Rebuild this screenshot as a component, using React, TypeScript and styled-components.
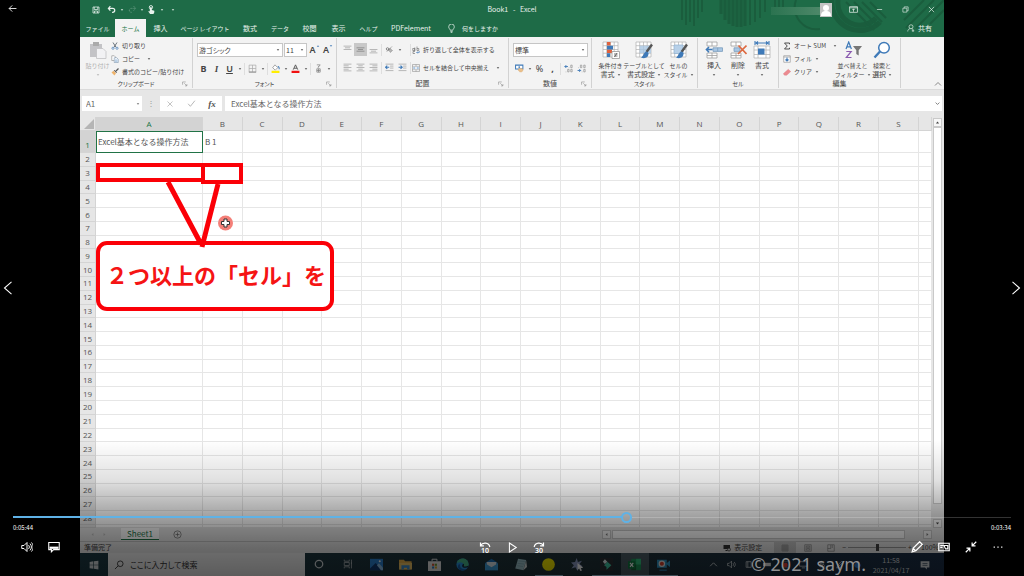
import React, { useState } from "react";
import styled, { createGlobalStyle, css } from "styled-components";

const Global = createGlobalStyle`
  *, *::before, *::after { box-sizing: border-box; }
  body { margin: 0; background: #000; overflow: hidden; }
  body, button, input, select { font-family: "Noto Sans CJK JP", "Noto Sans", sans-serif; }
  button, input, select { margin: 0; padding: 0; border: 0; background: none; color: inherit; font-size: inherit; line-height: inherit; border-radius: 0; outline: 0; }
  table { border-spacing: 0; }
`;

/* ---------- icons ---------- */

const Svg = styled.svg<{ $w: number; $h: number }>`
  display: block;
  flex: none;
  width: ${(p) => p.$w}px;
  height: ${(p) => p.$h}px;
  fill: none;
  stroke: currentColor;
  stroke-width: 1;
`;

const sheetGrid = (
  <>
    <path d="M1 1h15v15h-15z" fill="#fff" stroke="#b0b0b0" strokeWidth=".7" />
    <path d="M1 4.7h15M1 8.5h15M1 12.2h15M4.7 1v15M8.5 1v15M12.2 1v15" stroke="#b0b0b0" strokeWidth=".7" />
  </>
);
const brush = (
  <>
    <path d="M17 3.5l-5.5 7.5" stroke="#555" strokeWidth="2.4" />
    <path d="M11.6 10.5c-2.5 0-2.6 4-5.6 6 3 1.4 7.4 1 7.6-4.4z" fill="#3f7ab8" stroke="none" />
  </>
);
const cellRows = (
  <path d="M2 1h10v4h-10zM7 1v4M2 12h10v5h-10zM7 12v5M2 14.5h10" fill="#fff" stroke="#a0a0a0" strokeWidth=".8" />
);

const glyphs: Record<string, React.ReactNode> = {
  save: <path d="M2 2h12v12h-12zM4.5 2v5h7v-5M5 14v-4h6v4" strokeWidth="1.5" />,
  undo: <path d="M6 2L2.5 6L6 10M3 6h7c5 0 5 7 0 7h-1" strokeWidth="2.2" />,
  redo: <path d="M10 2L13.500 6L10 10M13 6h-7c-5 0-5 7 0 7h1" strokeWidth="1.5" strokeDasharray="2 1" />,
  touch: (
    <>
      <circle cx="7" cy="4" r="3" strokeWidth="1.6" />
      <path d="M5 4h3.500v5l4.500 1.200v2.800l-1.500 3h-6l-3.500-5h3z" fill="currentColor" stroke="none" />
    </>
  ),
  ribbonOpt: <path d="M1 3h14v10h-14zM1 5h14M8 12v-5M5.800 9l2.200-2.200L10.200 9" strokeWidth="1.3" />,
  minimize: <path d="M2 8h12" strokeWidth="1.5" />,
  restore: <path d="M2 5h9v9h-9zM5 5v-3h9v9h-3" strokeWidth="1.4" />,
  close: <path d="M2 2l12 12M14 2L2 14" strokeWidth="1.5" />,
  bulb: <path d="M5.500 11c0-2-2.500-3-2.500-6a5 5 0 0 1 10 0c0 3-2.500 4-2.500 6zM6 13.200h4M6.500 15.200h3" strokeWidth="1.3" />,
  person: <path d="M8 1.500a3.800 3.800 0 1 1 0 8a3.800 3.800 0 1 1 0-8M1.500 15c0-4 2.500-5.500 5-5.500M9 9.500c3 .5 3 1.500 3 2M12 11v5M9.500 13.500h5" strokeWidth="1.3" />,
  paste: (
    <>
      <path d="M1 3h12v13h-12z" fill="#c3c3c6" stroke="none" />
      <path d="M4 1h6v4h-6z" fill="#aaa" stroke="none" />
      <path d="M7.500 7.500h6.500l3 3v7h-9.500z" fill="#f2f2f4" stroke="#c0c0c3" strokeWidth=".8" />
    </>
  ),
  cut: (
    <>
      <path d="M4 1l6 9.500M12 1L6 10.500" stroke="#4a5560" strokeWidth="1.6" />
      <circle cx="4" cy="12.500" r="2.200" stroke="#3f7ab8" strokeWidth="1.4" />
      <circle cx="12" cy="12.500" r="2.200" stroke="#3f7ab8" strokeWidth="1.4" />
    </>
  ),
  copy: (
    <>
      <path d="M1.500 1.500h5l2.500 2.500v7h-7.500z" fill="#fff" stroke="#777" />
      <path d="M6.500 5.500h5l3 3v6.500h-8z" fill="#fff" stroke="#5f7f9f" />
      <path d="M8 10h5M8 12.500h5" stroke="#3f7ab8" />
    </>
  ),
  painter: (
    <>
      <path d="M15 1l-5 5" stroke="#555" strokeWidth="2.600" />
      <path d="M7.500 4l4.500 4.500-1.500 1.500-5-5z" fill="#555" stroke="none" />
      <path d="M5 5.500l5 5-3 4.500-6-6z" fill="#eeb36b" stroke="none" />
    </>
  ),
  launcher: <path d="M1.500 10v-7.500h8.500M6 6l6.500 6.500M13 8v5h-5" stroke="#777" strokeWidth="1.300" />,
  borders: (
    <>
      <path d="M2 2h12v12h-12zM8 2v12M2 8h12" stroke="#a5a5a5" strokeWidth="1.200" />
      <path d="M1.500 14.500h13" stroke="#777" strokeWidth="1.300" />
    </>
  ),
  fill: (
    <>
      <path d="M7 1.500l5 5-4.500 4.500-4.500-4.500z" fill="#fff" stroke="#666" />
      <path d="M12 4.500c3 0 2.500 3 2.500 5" stroke="#3f7ab8" strokeWidth="1.800" />
      <path d="M1 12h14v4h-14z" fill="#ffee00" stroke="none" />
    </>
  ),
  fontColor: (
    <>
      <path d="M4 10l4-8.500l4 8.500M5.500 7.500h5" stroke="#555" strokeWidth="1.700" />
      <path d="M1 12h14v4h-14z" fill="#f01010" stroke="none" />
    </>
  ),
  ruby: <path d="M5 1.500h6L7 6.500M8 4v2M5 8.500h6v6h-6zM5 11.500h6M8 8.500v6" stroke="#777" strokeWidth="1.200" />,
  alignTop: <path d="M1 2h14M3.500 5h9M1 8h14" stroke="#999" strokeWidth="1.200" />,
  alignMid: <path d="M1 5h14M3.500 8h9M1 11h14" stroke="#777" strokeWidth="1.200" />,
  alignBot: <path d="M1 8h14M3.500 11h9M1 14h14" stroke="#999" strokeWidth="1.200" />,
  orient: (
    <>
      <path d="M3 12L12.500 2.500M9 14l5-5" stroke="#888" strokeWidth="1.100" />
      <circle cx="4.500" cy="7" r="2.200" stroke="#666" strokeWidth="1.300" />
      <circle cx="9" cy="9" r="2.200" stroke="#666" strokeWidth="1.300" />
    </>
  ),
  left: <path d="M1 2h14M1 5h9M1 8h14M1 11h9M1 14h14" stroke="#999" strokeWidth="1.200" />,
  center: <path d="M1 2h14M4 5h8M1 8h14M4 11h8M1 14h14" stroke="#999" strokeWidth="1.200" />,
  right: <path d="M1 2h14M6 5h9M1 8h14M6 11h9M1 14h14" stroke="#999" strokeWidth="1.200" />,
  outdent: (
    <>
      <path d="M1 2h14M9 5.500h6M9 9h6M1 13.500h14" stroke="#999" strokeWidth="1.200" />
      <path d="M7.500 7.500h-6M4 4.500l-3 3l3 3" stroke="#3f7ab8" strokeWidth="2" />
    </>
  ),
  indent: (
    <>
      <path d="M1 2h14M9 5.500h6M9 9h6M1 13.500h14" stroke="#999" strokeWidth="1.200" />
      <path d="M1 7.500h6M4.500 4.500l3 3l-3 3" stroke="#3f7ab8" strokeWidth="2" />
    </>
  ),
  wrap: (
    <>
      <path d="M1.500 5h4v4h-4zM5.500 3v7M10 1v8h3.500v-4h-3.500M6 11h-4v4h4" stroke="#666" strokeWidth="1.200" />
      <path d="M14.500 10v3h-5M11.500 11l-2 2l2 2" stroke="#3f7ab8" strokeWidth="1.300" />
    </>
  ),
  merge: (
    <>
      <path d="M1 1h14v14h-14zM1 4.500h14M1 11.500h14M8 1v3.500M8 11.500v3.500" fill="#fff" stroke="#888" strokeWidth="1.100" />
      <path d="M3 8h4M9 8h4M5 6.500l-2 1.500l2 1.500M11 6.500l2 1.500l-2 1.500" stroke="#3f7ab8" strokeWidth="1.100" />
    </>
  ),
  currency: (
    <>
      <path d="M1 2h13v7h-13z" fill="#fff" stroke="#3f7ab8" strokeWidth="1.800" />
      <circle cx="7.500" cy="5.500" r="1.600" fill="#3f7ab8" stroke="none" />
      <path d="M6 9c2-1.500 6-1.500 8 0c0 4-1 5-4 5s-4-2-4-5z" fill="#eac08c" stroke="#d9a25e" strokeWidth=".800" />
    </>
  ),
  incDec: (
    <>
      <path d="M7 4.500h-5.500M4 2l-2.500 2.500l2.500 2.500" stroke="#3f7ab8" strokeWidth="1.700" />
      <path d="M8.500 6.500h1M12 2h2.500v4.500h-2.500zM3 14h1M6.500 9.500h2.500v4.500h-2.500zM12 9.500h2.500v4.500h-2.500z" stroke="#888" strokeWidth="1.100" />
    </>
  ),
  decDec: (
    <>
      <path d="M1 11.500h5.500M4 9l2.500 2.500l-2.500 2.500" stroke="#3f7ab8" strokeWidth="1.700" />
      <path d="M2.500 6.500h1M6 2h2.500v4.500h-2.500zM12 2h2.500v4.500h-2.500zM8.500 14h1M12 9.500h2.500v4.500h-2.500z" stroke="#888" strokeWidth="1.100" />
    </>
  ),
  condFormat: (
    <>
      {sheetGrid}
      <path d="M5 1h3.500v3.500h-3.500zM5 8.500h5v3.500h-5z" fill="#e0623d" stroke="none" />
      <path d="M5 4.700h6v3.800h-6zM5 12.200h3v3.800h-3z" fill="#3f7ab8" stroke="none" />
      <path d="M10 10.500h7.500v7h-7.500z" fill="#fff" stroke="#999" strokeWidth=".800" />
      <path d="M12 13h3.500M12 15h3.500M15 12l-2.500 4" stroke="#555" strokeWidth=".800" />
    </>
  ),
  tableFormat: (
    <>
      {sheetGrid}
      <path d="M4.700 4.700h11.300v7.500h-11.300z" fill="#a9c7e4" opacity=".8" stroke="none" />
      {brush}
    </>
  ),
  cellStyle: (
    <>
      {sheetGrid}
      <path d="M4 4h9v8.500h-9z" fill="#b7d0e8" stroke="#8fb1d1" strokeWidth=".700" />
      {brush}
    </>
  ),
  insertCell: (
    <>
      {cellRows}
      <path d="M8 6.800h9.500v3.600h-9.500zM12.700 6.800v3.600" fill="#a9c7e4" stroke="#7b9dbd" strokeWidth=".800" />
      <path d="M7.500 8.600h-6M4 6l-2.600 2.600l2.600 2.600" stroke="#3f7ab8" strokeWidth="1.500" />
    </>
  ),
  deleteCell: (
    <>
      {cellRows}
      <path d="M5 6.800h6v3.600h-6z" fill="#a9c7e4" stroke="#7b9dbd" strokeWidth=".800" />
      <path d="M9.500 4.500l8 8.500M17.500 4.500l-8.500 8.500" stroke="#dd6940" strokeWidth="1.700" />
    </>
  ),
  formatCell: (
    <>
      <path d="M1 5h16v12h-16zM1 9h16M1 13.500h16M5 5v12M13 5v12" fill="#fff" stroke="#b5b5b5" strokeWidth=".800" />
      <path d="M5 7.500h6.500v6h-6.500z" fill="#3f7ab8" stroke="none" />
      <path d="M3 2h12M5 .5l-2 1.500l2 1.500M13 .5l2 1.500l-2 1.500M2 0v4M16 0v4" stroke="#3f7ab8" strokeWidth="1.100" />
    </>
  ),
  sum: <path d="M13 4.500v-2.500h-10l5.500 6l-5.500 6h10v-2.500" stroke="#444" strokeWidth="1.900" />,
  fillDown: (
    <>
      <path d="M1.500 1.500h13v13h-13zM1.500 4h13" fill="#fff" stroke="#888" strokeWidth="1.200" />
      <path d="M8 5v7M5 9l3 3l3-3" stroke="#3f7ab8" strokeWidth="2.200" />
    </>
  ),
  eraser: <path d="M10.500 2.500l5 4.500l-8 7.500h-4.500l-2.500-3z" fill="#ec8a90" stroke="#d7757c" strokeWidth=".600" />,
  sortFilter: (
    <>
      <path d="M2 8l2.700-7l2.700 7M3 5.800h3.600" stroke="#3f7ab8" strokeWidth="1.200" />
      <path d="M2.300 10.500h4.900L2.300 16.500h5.200" stroke="#8b5bb0" strokeWidth="1.200" />
      <path d="M9 5h9l-3.300 4.200v5.300l-2.400-1.500v-3.800z" fill="#777" stroke="none" />
    </>
  ),
  find: (
    <>
      <circle cx="11" cy="6.800" r="5.300" fill="#fff" stroke="#3f7ab8" strokeWidth="1.500" />
      <path d="M7 10.500L1.500 16.500" stroke="#3f7ab8" strokeWidth="2.400" />
    </>
  ),
  cancel: <path d="M3 3l10 10M13 3L3 13" stroke="#aaa" strokeWidth="1.400" />,
  check: <path d="M2 8.500l4 4.500l8-10" stroke="#aaa" strokeWidth="1.500" />,
  plusCircle: <path d="M8 1.500a6.500 6.500 0 1 1 0 13a6.500 6.500 0 1 1 0-13M8 4.500v7M4.500 8h7" stroke="#666" strokeWidth="1.200" />,
  display: (
    <>
      <path d="M1 2h13v8h-13zM5 12h4v2h-4z" fill="#333" stroke="none" />
      <circle cx="12" cy="11" r="3" fill="#ddd" stroke="#333" strokeWidth="1.400" />
    </>
  ),
  viewNormal: <path d="M2 2h12v12h-12zM2 6h12M2 10h12M6 2v12M10 2v12" stroke="#777" strokeWidth="1" />,
  viewPage: <path d="M1.500 1.500h13v13h-13zM4.500 4h7v8h-7zM6 6.500h4M6 9h4" stroke="#777" strokeWidth="1.200" />,
  viewBreak: <path d="M1.500 1.500h13v13h-13zM1.500 9h6v-7M10.500 2v6" stroke="#777" strokeWidth="1.200" />,
  windows: <path d="M1 3l6-.900v5.500h-6zM8 2l7-1v6.600h-7zM1 8.500h6v5.500l-6-.900zM8 8.500h7v6.500l-7-1z" fill="#d5dadd" stroke="none" />,
  search: <path d="M10 1.500a4.500 4.500 0 1 1 0 9a4.500 4.500 0 1 1 0-9M6.700 9.300L1.500 14.500" strokeWidth="1.400" />,
  cortana: <circle cx="8" cy="8" r="6" stroke="#d5dadd" strokeWidth="2" />,
  taskView: <path d="M2 1v2.500h8v-2.500M2 15v-2.500h8v2.500M2 5.500h8v5h-8zM13.500 1v14M13.500 5v3" stroke="#a8b0b4" strokeWidth="1.400" />,
  photos: (
    <>
      <path d="M0 1h16v14h-16z" fill="#2b82d2" stroke="none" />
      <path d="M0 13l7-7l8 9h-15z" fill="#123a72" stroke="none" />
      <path d="M8.500 9l2.500-2.500l5 5.500v3h-2.500z" fill="#8dc0ea" stroke="none" />
      <circle cx="12" cy="4" r="1.200" fill="#fff" stroke="none" />
    </>
  ),
  folder: (
    <>
      <path d="M0 2h6l1.500 2h8v10h-15.500z" fill="#e5b04a" stroke="none" />
      <path d="M0 6h16v8h-16z" fill="#f0c667" stroke="none" />
      <path d="M3 14v-5h10v5h-3v-2h-4v2z" fill="#3d8fd1" stroke="none" />
    </>
  ),
  store: (
    <>
      <path d="M5 4v-2.500h6v2.500" stroke="#e8e8e8" strokeWidth="1.200" />
      <path d="M0 4h16v12h-16z" fill="#e8e8e8" stroke="none" />
      <path d="M5 7h2.600v2.600h-2.600z" fill="#d8502f" stroke="none" />
      <path d="M8.400 7h2.600v2.600h-2.600z" fill="#6f9f32" stroke="none" />
      <path d="M5 10.400h2.600v2.600h-2.600z" fill="#2c82c9" stroke="none" />
      <path d="M8.400 10.400h2.600v2.600h-2.600z" fill="#e0a92c" stroke="none" />
    </>
  ),
  edge: (
    <>
      <circle cx="8" cy="8" r="7.500" fill="#2a92dc" stroke="none" />
      <path d="M1 6c1.500-7 14-8 14.500 2c0 3-4 3.500-6 2c1.500-3-3-6-8.500-4z" fill="#48b98c" stroke="none" />
      <path d="M5 8c-1 5 4 7 8 5.500c-4 4-12 1-10.500-4c.5-1.500 1.500-2 2.500-1.500z" fill="#175fa8" stroke="none" />
      <path d="M8.500 7c2 0 1.500 2 1 3c1.500 1 4 .5 5.500-.5v2c-2 1-7.500 1-7.500-2z" fill="#162a38" stroke="none" />
    </>
  ),
  mail: (
    <>
      <path d="M0 6l8-5l8 5v9h-16z" fill="#1a6fb8" stroke="none" />
      <path d="M2 5h12v5l-6 3l-6-3z" fill="#dfe8ee" stroke="none" />
      <path d="M0 6.500l8 5l8-5v8.500h-16z" fill="#3fa2e0" stroke="none" />
    </>
  ),
  notes: (
    <>
      <path d="M5 1l10 1.500l-3.500 12.500l-10-2z" fill="#9fc4cc" stroke="none" />
      <path d="M5.500 3.500l8 1M4.500 6.500l8 1M4 9.500l7 1" stroke="#7fa8b4" strokeWidth="1" />
      <path d="M11.500 15l3.500-12l1 8z" fill="#d8e0e0" stroke="none" />
    </>
  ),
  yellow: <circle cx="8" cy="8" r="7.800" fill="#f5ea00" stroke="none" />,
  star: (
    <>
      <path d="M7 0l1.500 5l5-1.500l-3 4l4 3l-5 .5l-1.500 5l-2.500-4.500l-5 1.500l3-4l-3.500-3.500l5-.5z" fill="#8d9bc4" stroke="none" />
      <path d="M8 6l7 6l-3 .5l1.500 3l-2 .500l-1.500-3l-2 2z" fill="#fff" stroke="none" />
    </>
  ),
  filmora: (
    <>
      <path d="M0 0h16v16h-16z" fill="#2b2f35" stroke="none" />
      <path d="M5 9l4-4.500l5 4.500l-6 5.500v-3.500z" fill="#42c9a6" stroke="none" />
      <path d="M6 1.500l3 3l-3 3l-2.500-3z" fill="#e0eeee" stroke="none" />
    </>
  ),
  excel: (
    <>
      <path d="M4 1h12v14h-12z" fill="#1e9a5b" stroke="none" />
      <path d="M10 1h6v7h-6z" fill="#34c481" stroke="none" />
      <path d="M4 8h6v7h-6z" fill="#185c37" stroke="none" />
      <path d="M0 4h9v9h-9z" fill="#107c41" stroke="none" />
      <path d="M2.500 6l4 5M6.500 6l-4 5" stroke="#fff" strokeWidth="1.400" />
    </>
  ),
  recorder: (
    <>
      <path d="M0 2h12v10h-12zM12 6l4-3v8l-4-3z" fill="#2f96c8" stroke="none" />
      <circle cx="6" cy="7" r="4" fill="#e8e8e8" stroke="none" />
      <circle cx="6" cy="7" r="2.500" fill="#d8402c" stroke="none" />
      <path d="M3 15h9" stroke="#2c82ae" strokeWidth="1.500" />
    </>
  ),
  up: <path d="M2 11l6-6l6 6" strokeWidth="1.500" />,
  speaker: <path d="M1 6h3l4-4v12l-4-4h-3zM10.500 5.500c1.500 1.500 1.500 3.500 0 5M12.500 3.500c3 2.500 3 6.500 0 9" strokeWidth="1.300" />,
  meet: <path d="M2 3h9v10h-9zM13 5v6M5 3v10" strokeWidth="1.300" />,
  battery: <path d="M0 5h14v6h-14z" fill="#e5e5e5" stroke="none" />,
  shield: (
    <>
      <path d="M2 3h12v10h-12z" stroke="#999" />
      <circle cx="8" cy="9" r="4" fill="#e0403a" stroke="none" />
    </>
  ),
  network: <path d="M1 3h14v8h-14zM5 14h6" strokeWidth="1.300" />,
  ime: <path d="M3 4h10M8 1.500c-2 5-2 8 1 12M12 6c-2 6-8 8-8 4s9-4 9 0-3 4-4 4" strokeWidth="1.200" />,
  pen: <path d="M3 14l2-5l7-7l2 2l-7 7zM3 14h10" strokeWidth="1.200" />,
  drop: <path d="M8 1l6 8c0 7-12 7-12 0z" fill="#2b74c4" stroke="none" />,
  action: (
    <>
      <path d="M1 2h14v10h-4v3l-3-3h-7z" fill="#d5dadd" stroke="none" />
      <path d="M4 5.500h8M4 8.500h8" stroke="#1c2f48" />
    </>
  ),
  back: <path d="M15 8h-13M7.500 2.500L2 8l5.500 5.500" strokeWidth="1.500" />,
  volume: <path d="M1 6h3l4-4v12l-4-4h-3zM10 5.500c1.500 1.500 1.500 3.500 0 5M12 3.500c2.500 2.500 2.500 6.500 0 9M14 2c3 3.500 3 8.500 0 12" strokeWidth="1.300" />,
  caption: (
    <>
      <path d="M1 2h14v9.500h-7.500l-3 3v-3h-3.500z" strokeWidth="1.400" />
      <path d="M2 7.500h12v3h-12z" fill="currentColor" stroke="none" />
    </>
  ),
  play: <path d="M3.500 1.500l10 6.500l-10 6.500z" strokeWidth="1.500" />,
  skipBack: <path d="M2 2v4.500h4.500M2 6c3-4.500 11-4.500 12.500 2" strokeWidth="1.600" />,
  skipFwd: <path d="M14 2v4.500h-4.500M14 6c-3-4.500-11-4.500-12.500 2" strokeWidth="1.600" />,
  pencil: <path d="M1.500 14.500l1.500-5l8.500-8.500l3.500 3.500l-8.500 8.500zM3 10l3 3" strokeWidth="1.700" />,
  mini: <path d="M1 3h14v10h-14zM3 6h4M3 8.500h3M8 6h5v4.500h-3z" strokeWidth="1.500" />,
  shrink: <path d="M15 1l-5.500 5.500M9.500 2v4.500h4.500M1 15l5.500-5.500M2 9.500h4.500v4.500" strokeWidth="1.600" />,
  more: <path d="M1 8h2M7 8h2M13 8h2" strokeWidth="2" />,
  prev: <path d="M12 1L4 8l8 7" strokeWidth="1.200" />,
  next: <path d="M4 1l8 7l-8 7" strokeWidth="1.200" />,
  caretDown: <path d="M3 5l5 6l5-6z" fill="currentColor" stroke="none" />,
  caretUp: <path d="M3 11l5-6l5 6z" fill="currentColor" stroke="none" />,
  caretLeft: <path d="M11 3l-6 5l6 5z" fill="currentColor" stroke="none" />,
  caretRight: <path d="M5 3l6 5l-6 5z" fill="currentColor" stroke="none" />,
  chevronDown: <path d="M2 5l6 6l6-6" strokeWidth="2.600" />,
};

function Icon({ name, size = 9, h, box = 16 }: { name: string; size?: number; h?: number; box?: number }) {
  return (
    <Svg $w={size} $h={h ?? size} viewBox={`0 0 ${box} ${box}`} aria-hidden="true">
      {glyphs[name]}
    </Svg>
  );
}

/* ---------- page frame ---------- */

const Player = styled.main`
  position: relative;
  display: flex;
  height: 100vh;
  padding: 0 80px;
  background: #000;
  color: #fff;
`;
const Desktop = styled.section`
  display: flex;
  flex-direction: column;
  flex: 1;
  min-width: 0;
  background: #e6e6e6;
  color: #444;
  font-size: 7px;
  line-height: 9px;
  font-feature-settings: "palt";
  white-space: nowrap;
  overflow: hidden;
`;
/* Labels with kana use a smaller size than those in kanji or Latin only. */
const Label = styled.span<{ $kana: boolean }>`
  font-size: ${(p) => (p.$kana ? 6 : 7)}px;
`;

const TitleArea = styled.header`
  position: relative;
  flex: none;
  background: #1e6b47;
  color: #e9f2ed;
`;
const Pattern = styled.svg`
  position: absolute;
  top: 0;
  right: 0;
  width: 264px;
  height: 37px;
`;
const TitleBar = styled.div`
  position: relative;
  display: grid;
  grid-template-columns: 1fr auto 1fr;
  align-items: center;
  height: 19px;
`;
const QuickAccess = styled.div`
  display: flex;
  align-items: center;
  padding-left: 9px;
`;
const WindowButtons = styled.div`
  display: flex;
  align-items: center;
  justify-content: flex-end;
`;
const AccountName = styled.span`
  width: 49px;
  height: 8px;
  margin-top: 2px;
  background: linear-gradient(90deg, #2b7350, #4d8869);
`;
const Avatar = styled.button`
  width: 12px;
  height: 14px;
  margin-right: 8px;
  background: #c4c4c4;
  color: #fff;
`;
const SquareButton = styled.button<{ $w: number; $faint?: boolean; $on?: boolean }>`
  display: flex;
  align-items: center;
  justify-content: center;
  flex: none;
  width: ${(p) => p.$w}px;
  height: 13px;
  opacity: ${(p) => (p.$faint ? 0.35 : 1)};
  background: ${(p) => (p.$on ? "#c8c8c8" : "none")};
`;
const TabRow = styled.nav`
  position: relative;
  display: flex;
  height: 18px;
`;
const RibbonTab = styled.button<{ $w: number; $active?: boolean }>`
  width: ${(p) => p.$w}px;
  flex: none;
  line-height: 17px;
  ${(p) => p.$active && css`background: #f3f3f3; color: #217346;`}
`;
const TellMe = styled.button`
  display: flex;
  align-items: center;
  gap: 6px;
  margin-left: 9px;
`;
const Share = styled(TellMe)`
  gap: 3px;
  margin: 0 12px 0 auto;
`;

/* ---------- ribbon ---------- */

const Ribbon = styled.div`
  display: flex;
  flex: none;
  height: 53px;
  background: #f3f3f3;
  border-bottom: 1px solid #dadada;
`;
const GroupBox = styled.section<{ $w: number }>`
  display: flex;
  flex-direction: column;
  flex: none;
  width: ${(p) => p.$w}px;
  margin: 1px 0;
  padding: 2px 4px 0;
  border-right: 1px solid #d2d2d2;
`;
const GroupBody = styled.div`
  display: flex;
  flex: 1;
`;
const GroupFoot = styled.footer`
  display: grid;
  grid-template-columns: 1fr auto 1fr;
  align-items: center;
  height: 9px;
`;
const Launcher = styled.button`
  justify-self: end;
`;
const Stack = styled.div<{ $rows?: number }>`
  display: flex;
  flex-direction: column;
  flex: 1;
  gap: ${(p) => (p.$rows === 3 ? 4 : 5)}px;
  padding-top: ${(p) => (p.$rows === 3 ? 1 : 3)}px;
`;
const Row = styled.div<{ $gap?: number }>`
  display: flex;
  align-items: center;
  gap: ${(p) => p.$gap ?? 0}px;
`;
const Slot = styled.div`
  display: flex;
  width: 26px;
`;
const Divider = styled.i`
  width: 1px;
  height: 12px;
  margin: 0 1px;
  background: #dedede;
`;
const LabelButton = styled.button<{ $wide?: boolean }>`
  display: flex;
  align-items: center;
  gap: 3px;

  svg + span + svg { margin-left: ${(p) => (p.$wide ? 4 : 0)}px; }
`;
const BigButton = styled.button<{ $w: number; $dim?: boolean }>`
  display: flex;
  flex-direction: column;
  align-items: center;
  flex: none;
  width: ${(p) => p.$w}px;
  padding-top: 1px;
  color: ${(p) => (p.$dim ? "#b0b0b0" : "inherit")};

  svg + span { margin-top: 2px; }
`;
const TextLine = styled.span`
  display: flex;
  align-items: center;
  justify-content: center;
  gap: 2px;
  height: 9px;
`;
const PickBox = styled.label<{ $w: number }>`
  display: grid;
  align-items: center;
  width: ${(p) => p.$w}px;
  height: 14px;
  background: #fff;
  border: 1px solid #c6c6c6;

  select { grid-area: 1 / 1; appearance: none; width: 100%; padding-left: 1px; font-feature-settings: inherit; }
  svg { grid-area: 1 / 1; justify-self: end; margin-right: 2px; pointer-events: none; }
`;
const Letter = styled.span<{ $kind?: "bold" | "italic" | "under" | "grow" }>`
  font: 9px/10px "Noto Sans", sans-serif;
  color: #444;
  ${(p) => p.$kind === "bold" && css`font-weight: 700;`}
  ${(p) => p.$kind === "italic" && css`font-family: "Liberation Serif", serif; font-style: italic; font-weight: 700;`}
  ${(p) => p.$kind === "under" && css`font-weight: 600; text-decoration: underline;`}
  ${(p) => p.$kind === "grow" && css`font-weight: 600;`}
`;
const SizeMark = styled.span`
  align-self: flex-start;
  color: #3f7ab8;
`;
const CollapseRibbon = styled.button`
  align-self: flex-end;
  margin: 0 2px 1px auto;
  color: #666;
`;

/* ---------- formula bar ---------- */

const FormulaBar = styled.div`
  display: flex;
  flex: none;
  height: 27px;
  padding: 6px 2px;
  color: #666;
  font-size: 8px;
`;
const NameBox = styled.label`
  display: flex;
  align-items: center;
  width: 60px;
  padding: 0 2px 0 4px;
  background: #fff;

  input { flex: 1; min-width: 0; }
`;
const Grip = styled.span`
  width: 18px;
  text-align: center;
  line-height: 14px;
  color: #999;
`;
const FxBox = styled.div`
  display: flex;
  align-items: center;
  justify-content: space-around;
  width: 62px;
  margin-right: 3px;
  background: #fff;
`;
const FxLabel = styled.button`
  font: italic 700 9px/12px "Liberation Serif", serif;
  color: #555;
`;
const FormulaInput = styled(NameBox)`
  flex: 1;
  width: auto;
  padding-left: 6px;
  font-feature-settings: normal;
`;

/* ---------- sheet ---------- */

const SheetArea = styled.div`
  position: relative;
  display: flex;
  flex: 1;
  min-height: 0;
`;
const Grid = styled.table`
  display: grid;
  flex: 1;
  grid-template-columns: 16px 107px repeat(18, 3fr) 1fr;
  grid-template-rows: 14px 22px repeat(27, 6fr) 1fr;
  background: #fff;
  color: #555;
  font-size: 8px;
  line-height: 12px;
  font-feature-settings: normal;

  thead, tbody, tr { display: contents; }
`;
const HeadCell = styled.th<{ $on?: boolean; $side?: boolean }>`
  display: flex;
  justify-content: center;
  align-items: ${(p) => (p.$side ? "flex-end" : "center")};
  min-width: 0;
  min-height: 0;
  overflow: hidden;
  background: ${(p) => (p.$on ? "#d3d3d3" : "#e6e6e6")};
  color: ${(p) => (p.$on ? "#217346" : "#555")};
  border: solid #d4d4d4;
  border-width: 0 1px 1px 0;
  font: 400 8px/12px "Open Sans", "Noto Sans", sans-serif;
`;
const Corner = styled(HeadCell)`
  justify-content: flex-end;
  align-items: flex-end;
  padding: 2px 1px 1px;

  &::after {
    content: "";
    border: solid transparent;
    border-width: 0 0 10px 10px;
    border-bottom-color: #b5b5b5;
  }
`;
const Cell = styled.td<{ $selected?: boolean }>`
  display: flex;
  align-items: center;
  min-width: 0;
  min-height: 0;
  padding: 0 2px;
  overflow: hidden;
  border: solid #e6e6e6;
  border-width: 0 1px 1px 0;
  ${(p) => p.$selected && css`outline: 1px solid #217346; outline-offset: -1px;`}
`;
const VScroll = styled.div`
  display: flex;
  flex-direction: column;
  width: 12px;
  padding: 1px 2px 0 1px;
`;
const ScrollButton = styled.button`
  display: flex;
  align-items: center;
  justify-content: center;
  flex: none;
  width: 9px;
  height: 9px;
  background: #f7f7f7;
  border: 1px solid #c9c9c9;
`;
const VThumb = styled.div`
  flex: 1;
  margin-bottom: 15px;
  background: #fff;
  border: 1px solid #c9c9c9;
`;
const Marks = styled.svg`
  position: absolute;
  top: 0;
  left: 0;
  width: 280px;
  height: 140px;
  fill: none;
  stroke: #fb0007;
`;
const Callout = styled.p`
  position: absolute;
  left: 16px;
  top: 124px;
  width: 238px;
  margin: 0;
  padding: 12px 6px 16px;
  background: #fff;
  border: 4px solid #fb0007;
  border-radius: 11px;
  color: #f51414;
  font-size: 22px;
  font-weight: 700;
  line-height: 34px;
  font-feature-settings: normal;
`;

/* ---------- bottom bars ---------- */

const SheetTabs = styled.div`
  display: flex;
  align-items: center;
  flex: none;
  height: 13px;
  padding: 0 12px 0 6px;
  color: #777;
`;
const SheetTab = styled.button`
  align-self: flex-start;
  width: 38px;
  height: 12px;
  margin: 0 11px 0 11px;
  background: #fff;
  border-bottom: 1px solid #217346;
  color: #217346;
  font-size: 8px;
  line-height: 10px;
`;
const HScroll = styled.div`
  display: flex;
  align-items: center;
  width: 39%;
  margin-left: auto;
`;
const HThumb = styled.div`
  flex: 1;
  height: 9px;
  margin: 0 18px 0 1px;
  background: #fff;
  border: 1px solid #c9c9c9;
`;
const StatusBar = styled.footer`
  display: flex;
  align-items: center;
  flex: none;
  height: 12px;
  padding: 0 5px 0 4px;
  border-top: 1px solid #c4c4c4;

  > span:first-child { margin-right: auto; }
`;
const ZoomRange = styled.input`
  appearance: none;
  width: 58px;
  height: 8px;
  margin: 0 2px;
  background: linear-gradient(#999, #999) center / 100% 1px no-repeat;

  &::-webkit-slider-thumb { appearance: none; width: 3px; height: 7px; background: #444; }
`;
const ZoomText = styled.span`
  width: 27px;
  text-align: right;
`;
const Taskbar = styled.nav`
  display: flex;
  flex: none;
  height: 23px;
  background: linear-gradient(90deg, #1c3a44, #1f3138 60%, #1b2e47);
  color: #d5dadd;
`;
const StartButton = styled.button`
  display: grid;
  place-items: center;
  width: 28px;
`;
const SearchBox = styled.label`
  display: flex;
  align-items: center;
  gap: 6px;
  width: 197px;
  padding-left: 6px;
  background: #f2f2f2;
  color: #333;
  font-size: 8px;
  line-height: 12px;

  input { flex: 1; min-width: 0; font-feature-settings: inherit; }
  input::placeholder { color: #333; opacity: 1; }
`;
const Apps = styled.div`
  display: grid;
  grid-template-columns: repeat(13, 1fr);
  width: 373px;
`;
const AppButton = styled.button<{ $open?: boolean; $current?: boolean }>`
  display: grid;
  place-items: center;
  border-bottom: 1px solid ${(p) => (p.$open ? "#a9cfe6" : "transparent")};
  background: ${(p) => (p.$current ? "#4a5c64" : "none")};
`;
const Tray = styled.div`
  display: flex;
  align-items: center;
  gap: 9px;
  margin-left: auto;
  padding-right: 14px;
`;
const Clock = styled.time`
  width: 40px;
  text-align: center;
  line-height: 10px;
`;

/* ---------- video player layer ---------- */

const Shade = styled.div`
  position: absolute;
  inset: auto 0 0;
  height: 136px;
  background: linear-gradient(transparent, rgba(0, 0, 0, 0.12) 30%, rgba(0, 0, 0, 0.45) 65%, rgba(0, 0, 0, 0.55) 80%, rgba(0, 0, 0, 0.62));
  pointer-events: none;
`;
const Watermark = styled.span`
  position: absolute;
  right: 158px;
  bottom: 0;
  color: #8f9092;
  font: 18px/24px "Noto Sans", sans-serif;
`;
const EdgeButton = styled.button<{ $side: "left" | "right"; $top?: boolean }>`
  position: absolute;
  ${(p) => p.$side}: ${(p) => (p.$top ? 8 : 1)}px;
  top: ${(p) => (p.$top ? "4px" : "calc(50% - 7px)")};
`;
const Transport = styled.div`
  position: absolute;
  inset: auto 0 0;
  padding: 0 13px 19px;
  font-size: 6px;
  line-height: 10px;
`;
const Seek = styled.input`
  display: block;
  appearance: none;
  width: 100%;
  height: 12px;
  background:
    linear-gradient(#5fb2e6, #5fb2e6) left center / 61% 2px no-repeat,
    linear-gradient(rgba(255, 255, 255, 0.2), rgba(255, 255, 255, 0.2)) right center / 38% 1px no-repeat;

  &::-webkit-slider-thumb {
    appearance: none;
    box-sizing: border-box;
    width: 11px;
    height: 11px;
    background: transparent;
    border: 2px solid #5fb2e6;
    border-radius: 50%;
  }
`;
const Times = styled.div`
  display: flex;
  justify-content: space-between;
`;
const Controls = styled.div`
  display: grid;
  grid-template-columns: 1fr auto 1fr;
  margin-top: 4px;

  > div { display: flex; }
  > div:last-child { justify-content: flex-end; }
`;
const ControlButton = styled.button`
  display: flex;
  flex-direction: column;
  align-items: center;
  justify-content: center;
  width: 27px;
  height: 20px;
`;
const SkipText = styled.span`
  margin-top: -6px;
  font: 600 7px/7px "Noto Sans", sans-serif;
`;

/* ---------- pieces ---------- */

const hasKana = (text: string) => /[\u3041-\u30f6]/.test(text);
const Text = ({ children }: { children: string }) => <Label $kana={hasKana(children)}>{children}</Label>;

const Caret = ({ w = 7 }: { w?: number }) => (
  <SquareButton $w={w} aria-label="その他">
    <Icon name="caretDown" size={4} />
  </SquareButton>
);
const Tool = ({ name, on }: { name: string; on?: boolean }) => (
  <SquareButton $w={13} $on={on} aria-label={name}>
    <Icon name={name} />
  </SquareButton>
);
function Group({ w, title, launcher, children }: { w: number; title: string; launcher?: boolean; children: React.ReactNode }) {
  return (
    <GroupBox $w={w}>
      <GroupBody>{children}</GroupBody>
      <GroupFoot>
        <span />
        <Text>{title}</Text>
        {launcher && <Launcher aria-label={title}><Icon name="launcher" size={6} /></Launcher>}
      </GroupFoot>
    </GroupBox>
  );
}
function Big({ name, w, lines, dim }: { name: string; w: number; lines: string[]; dim?: boolean }) {
  return (
    <BigButton $w={w} $dim={dim}>
      <Icon name={name} size={18} box={18} />
      <TextLine><Text>{lines[0]}</Text></TextLine>
      <TextLine>{lines[1] && <Text>{lines[1]}</Text>}<Icon name="caretDown" size={4} /></TextLine>
    </BigButton>
  );
}
const Small = ({ name, text, caret, wide }: { name: string; text: string; caret?: boolean; wide?: boolean }) => (
  <LabelButton $wide={wide}>
    <Icon name={name} size={8} />
    <Text>{text}</Text>
    {caret && <Icon name="caretDown" size={4} />}
  </LabelButton>
);
function Picker({ w, value, label }: { w: number; value: string; label: string }) {
  return (
    <PickBox $w={w}>
      <select aria-label={label}><option>{value}</option></select>
      <Icon name="caretDown" size={4} />
    </PickBox>
  );
}

const tabs: [string, number][] = [
  ["ファイル", 35], ["ホーム", 31], ["挿入", 29], ["ページ レイアウト", 60], ["数式", 30],
  ["データ", 30], ["校閲", 29], ["表示", 29], ["ヘルプ", 31], ["PDFelement", 54],
];
const columns = [..."ABCDEFGHIJKLMNOPQRS", ""];
const rows = Array.from({ length: 29 }, (_, i) => i + 1);
const values: Record<string, string> = { A1: "Excel基本となる操作方法", B1: "B 1" };
const apps: [string, boolean?, boolean?][] = [
  ["cortana"], ["taskView"], ["photos"], ["folder"], ["store"], ["edge"], ["mail"], ["notes"],
  ["yellow", true], ["star"], ["filmora", true], ["excel", true, true], ["recorder", true],
];
const trayIcons = ["up", "speaker", "meet", "battery", "shield", "network", "ime", "pen", "drop"];

export default function App() {
  const [formula, setFormula] = useState(values.A1);
  const [search, setSearch] = useState("");
  return (
    <Player>
      <Global />
      <Desktop>
        <TitleArea>
          <Pattern viewBox="0 0 264 37" fill="none" stroke="#1a5d3d" strokeWidth="2" aria-hidden="true">
            <path d="M2 0v20M6 0v25M10 0v22M14 0v26M18 0v18M22 0v12" />
            <path d="M41 0v14M45 0v20M49 0v24M53 0v26M57 0v27M61 0v27M65 0v26" strokeWidth="3" />
            <path d="M70 0v25M75 0v22M80 0v18M85 0v12M95 0v11M99 0v10M103 0v9" />
            <path d="M116 0a22 22 0 0 0 24 29" />
            <path d="M152 0a28 28 0 0 0 48 22M158 0a22 22 0 0 0 38 18" strokeWidth="5" />
            <path d="M166 2l28 28M174 2l24 24M182 2l20 20M190 2l16 16M224 20l20-20M226 28l28-28M236 28l28-28M250 24l14-14" />
          </Pattern>
          <TitleBar>
            <QuickAccess>
              <SquareButton $w={14} aria-label="保存"><Icon name="save" size={8} /></SquareButton>
              <SquareButton $w={16} aria-label="元に戻す"><Icon name="undo" /></SquareButton>
              <Caret w={5} />
              <SquareButton $w={16} $faint aria-label="やり直し"><Icon name="redo" /></SquareButton>
              <Caret w={4} />
              <SquareButton $w={15} aria-label="タッチ"><Icon name="touch" /></SquareButton>
              <Caret w={5} />
              <Caret w={18} />
            </QuickAccess>
            <span>Book1&nbsp; &nbsp;-&nbsp; &nbsp;Excel</span>
            <WindowButtons>
              <AccountName />
              <Avatar aria-label="アカウント">
                <svg width="12" height="14" viewBox="0 0 12 14" fill="currentColor" aria-hidden="true">
                  <circle cx="6" cy="5" r="3" />
                  <path d="M1 13c0-4 2-5 5-5s5 1 5 5z" />
                </svg>
              </Avatar>
              {["ribbonOpt", "minimize", "restore", "close"].map((n) => (
                <SquareButton key={n} $w={26} aria-label={n}><Icon name={n} size={n === "ribbonOpt" ? 9 : 7} /></SquareButton>
              ))}
            </WindowButtons>
          </TitleBar>
          <TabRow>
            {tabs.map(([t, w]) => <RibbonTab key={t} $w={w} $active={t === "ホーム"}><Text>{t}</Text></RibbonTab>)}
            <TellMe><Icon name="bulb" /><Text>何をしますか</Text></TellMe>
            <Share><Icon name="person" size={8} />共有</Share>
          </TabRow>
        </TitleArea>

        <Ribbon>
          <Group w={113} title="クリップボード" launcher>
            <Big name="paste" w={27} lines={["貼り付け", ""]} dim />
            <Stack $rows={3}>
              <Small name="cut" text="切り取り" />
              <Small name="copy" text="コピー" caret wide />
              <Small name="painter" text="書式のコピー/貼り付け" />
            </Stack>
          </Group>
          <Group w={144} title="フォント" launcher>
            <Stack>
              <Row $gap={1}>
                <Picker w={86} value="游ゴシック" label="フォント" />
                <Picker w={23} value="11" label="サイズ" />
                <SquareButton $w={13} aria-label="拡大"><Letter $kind="grow">A</Letter><SizeMark><Icon name="caretUp" size={4} /></SizeMark></SquareButton>
                <SquareButton $w={12} aria-label="縮小"><Letter $kind="grow">A</Letter><SizeMark><Icon name="caretDown" size={4} /></SizeMark></SquareButton>
              </Row>
              <Row>
                <SquareButton $w={13}><Letter $kind="bold">B</Letter></SquareButton>
                <SquareButton $w={13}><Letter $kind="italic">I</Letter></SquareButton>
                <SquareButton $w={13}><Letter $kind="under">U</Letter></SquareButton>
                <Caret /><Divider />
                <Tool name="borders" /><Caret /><Divider />
                <Tool name="fill" /><Caret />
                <Tool name="fontColor" /><Caret /><Divider />
                <Tool name="ruby" /><Caret />
              </Row>
            </Stack>
          </Group>
          <Group w={172} title="配置" launcher>
            <Stack>
              <Row>
                <Tool name="alignTop" /><Tool name="alignMid" on /><Tool name="alignBot" /><Divider />
                <Slot><Tool name="orient" /><Caret /></Slot><Divider />
                <Small name="wrap" text="折り返して全体を表示する" />
              </Row>
              <Row>
                <Tool name="left" /><Tool name="center" /><Tool name="right" /><Divider />
                <Slot><Tool name="outdent" /><Tool name="indent" /></Slot><Divider />
                <Small name="merge" text="セルを結合して中央揃え" caret wide />
              </Row>
            </Stack>
          </Group>
          <Group w={83} title="数値" launcher>
            <Stack>
              <Row><Picker w={75} value="標準" label="表示形式" /></Row>
              <Row>
                <Tool name="currency" /><Caret />
                <SquareButton $w={13}><Letter>%</Letter></SquareButton>
                <SquareButton $w={13}><Letter $kind="bold">,</Letter></SquareButton><Divider />
                <Tool name="incDec" /><Tool name="decDec" />
              </Row>
            </Stack>
          </Group>
          <Group w={106} title="スタイル">
            <Big name="condFormat" w={29} lines={["条件付き", "書式"]} />
            <Big name="tableFormat" w={38} lines={["テーブルとして", "書式設定"]} />
            <Big name="cellStyle" w={31} lines={["セルの", "スタイル"]} />
          </Group>
          <Group w={81} title="セル">
            <Big name="insertCell" w={24} lines={["挿入", ""]} />
            <Big name="deleteCell" w={24} lines={["削除", ""]} />
            <Big name="formatCell" w={24} lines={["書式", ""]} />
          </Group>
          <Group w={122} title="編集">
            <Stack $rows={3}>
              <Small name="sum" text="オート SUM" caret wide />
              <Small name="fillDown" text="フィル" caret />
              <Small name="eraser" text="クリア" caret />
            </Stack>
            <Big name="sortFilter" w={31} lines={["並べ替えと", "フィルター"]} />
            <Big name="find" w={28} lines={["検索と", "選択"]} />
          </Group>
          <CollapseRibbon aria-label="リボンを折りたたむ"><Icon name="up" size={8} /></CollapseRibbon>
        </Ribbon>

        <FormulaBar>
          <NameBox><input aria-label="名前ボックス" defaultValue="A1" /><Icon name="caretDown" size={4} /></NameBox>
          <Grip>⋮</Grip>
          <FxBox><Icon name="cancel" size={8} /><Icon name="check" size={9} /><FxLabel>fx</FxLabel></FxBox>
          <FormulaInput>
            <input aria-label="数式バー" value={formula} onChange={(e) => setFormula(e.target.value)} />
            <Icon name="chevronDown" size={5} />
          </FormulaInput>
        </FormulaBar>

        <SheetArea>
          <Grid>
            <thead>
              <tr>
                <Corner aria-label="すべて選択" />
                {columns.map((c) => <HeadCell key={c} scope="col" $on={c === "A"}>{c}</HeadCell>)}
              </tr>
            </thead>
            <tbody>
              {rows.map((r) => (
                <tr key={r}>
                  <HeadCell scope="row" $side={r === 1} $on={r === 1}>{r < 29 && r}</HeadCell>
                  {columns.map((c) => (
                    <Cell key={c} $selected={c + r === "A1"}>{values[c + r]}</Cell>
                  ))}
                </tr>
              ))}
            </tbody>
          </Grid>
          <VScroll>
            <ScrollButton aria-label="上へ"><Icon name="caretUp" size={5} /></ScrollButton>
            <VThumb />
            <ScrollButton aria-label="下へ"><Icon name="caretDown" size={5} /></ScrollButton>
          </VScroll>
          <Callout>２つ以上の「セル」を</Callout>
          <Marks viewBox="0 0 280 140" aria-hidden="true">
            <path d="M18 48h105v15h-105zM123 48h38v17h-38z" strokeWidth="4" />
            <path d="M88 65l33 62M138 67l-16 63" strokeWidth="5" />
            <circle cx="145.500" cy="106" r="7.500" fill="#f47f78" stroke="none" />
            <path d="M144 102h3v2.500h2.500v3h-2.500v2.500h-3v-2.500h-2.500v-3h2.500z" fill="#fff" stroke="#333" strokeWidth="1" />
          </Marks>
        </SheetArea>

        <SheetTabs>
          <SquareButton $w={12} $faint aria-label="前のシート"><Icon name="caretLeft" size={5} /></SquareButton>
          <SquareButton $w={12} $faint aria-label="次のシート"><Icon name="caretRight" size={5} /></SquareButton>
          <SheetTab>Sheet1</SheetTab>
          <SquareButton $w={14} aria-label="新しいシート"><Icon name="plusCircle" /></SquareButton>
          <HScroll>
            <ScrollButton aria-label="左へ"><Icon name="caretLeft" size={5} /></ScrollButton>
            <HThumb />
            <ScrollButton aria-label="右へ"><Icon name="caretRight" size={5} /></ScrollButton>
          </HScroll>
        </SheetTabs>
        <StatusBar>
          <span>準備完了</span>
          <Small name="display" text="表示設定" />
          <Row>
            <SquareButton $w={12} />
            <SquareButton $w={22} $on aria-label="標準"><Icon name="viewNormal" size={8} /></SquareButton>
            <SquareButton $w={24} aria-label="ページ レイアウト"><Icon name="viewPage" size={8} /></SquareButton>
            <SquareButton $w={22} aria-label="改ページ"><Icon name="viewBreak" size={8} /></SquareButton>
          </Row>
          <span>−</span>
          <ZoomRange type="range" aria-label="ズーム" min={10} max={190} defaultValue={100} />
          <span>+</span>
          <ZoomText>100%</ZoomText>
        </StatusBar>
        <Taskbar>
          <StartButton aria-label="スタート"><Icon name="windows" size={10} /></StartButton>
          <SearchBox>
            <Icon name="search" size={10} />
            <input aria-label="検索" placeholder="ここに入力して検索" value={search} onChange={(e) => setSearch(e.target.value)} />
          </SearchBox>
          <Apps>
            {apps.map(([n, open, current]) => (
              <AppButton key={n} $open={open} $current={current} aria-label={n}>
                <Icon name={n} size={n === "cortana" || n === "taskView" ? 10 : 13} />
              </AppButton>
            ))}
          </Apps>
          <Tray>
            {trayIcons.map((n) => <Icon key={n} name={n} />)}
            <Clock>11:58<br />2021/04/17</Clock>
            <Icon name="action" size={10} />
          </Tray>
        </Taskbar>
      </Desktop>

      <Shade />
      <Watermark>© 2021 saym.</Watermark>
      <EdgeButton $side="left" $top aria-label="戻る"><Icon name="back" size={9} /></EdgeButton>
      <EdgeButton $side="left" aria-label="前へ"><Icon name="prev" size={14} /></EdgeButton>
      <EdgeButton $side="right" aria-label="次へ"><Icon name="next" size={14} /></EdgeButton>
      <Transport>
        <Seek type="range" aria-label="再生位置" max={558} defaultValue={344} />
        <Times><span>0:05:44</span><span>0:03:34</span></Times>
        <Controls>
          <div>
            <ControlButton aria-label="音量"><Icon name="volume" size={12} /></ControlButton>
            <ControlButton aria-label="字幕"><Icon name="caption" size={12} /></ControlButton>
          </div>
          <div>
            <ControlButton aria-label="10 秒戻る"><Icon name="skipBack" size={12} /><SkipText>10</SkipText></ControlButton>
            <ControlButton aria-label="再生"><Icon name="play" size={11} /></ControlButton>
            <ControlButton aria-label="30 秒進む"><Icon name="skipFwd" size={12} /><SkipText>30</SkipText></ControlButton>
          </div>
          <div>
            <ControlButton aria-label="編集"><Icon name="pencil" size={12} /></ControlButton>
            <ControlButton aria-label="ミニ ビュー"><Icon name="mini" size={12} /></ControlButton>
            <ControlButton aria-label="全画面表示の終了"><Icon name="shrink" size={12} /></ControlButton>
            <ControlButton aria-label="その他"><Icon name="more" size={10} /></ControlButton>
          </div>
        </Controls>
      </Transport>
    </Player>
  );
}
